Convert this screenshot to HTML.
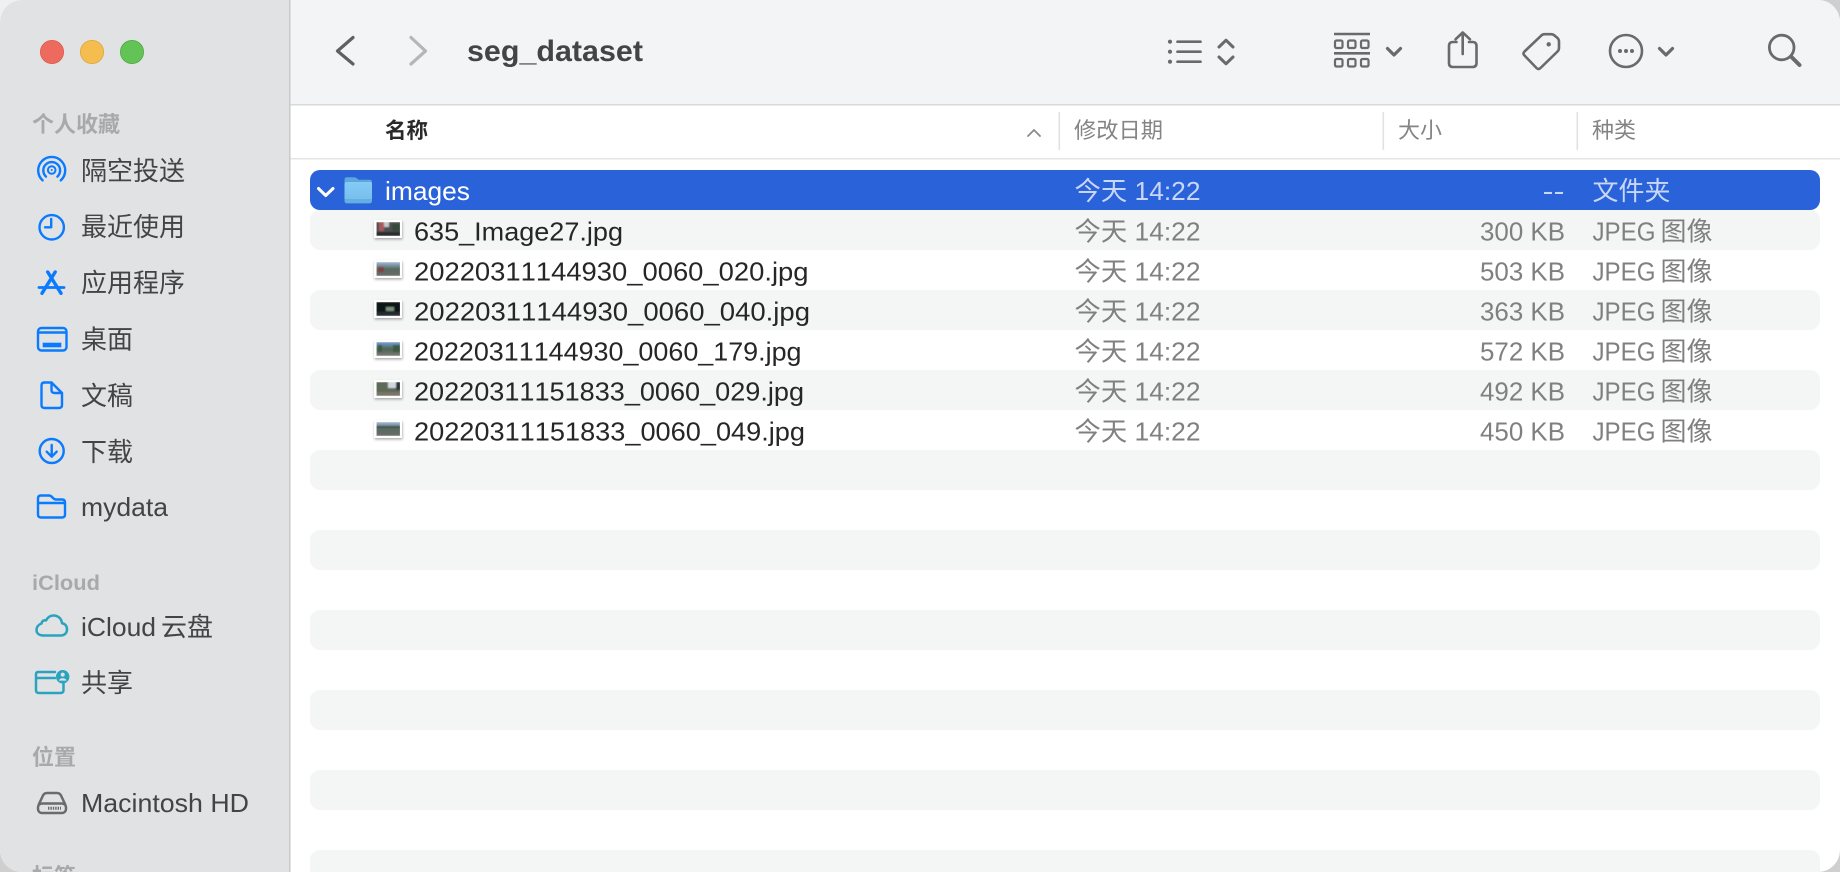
<!DOCTYPE html>
<html><head><meta charset="utf-8"><title>seg_dataset</title>
<style>
html,body{margin:0;padding:0;width:1840px;height:872px;overflow:hidden;background:#fff}
svg{display:block}
text{font-family:"Liberation Sans","Noto Sans CJK SC",sans-serif;font-kerning:none}
.side{font-size:26px;fill:#444446}
.lab{font-size:22px;font-weight:bold;fill:#a8a9ab}
.hd{font-size:22px;fill:#848484}
.name{font-size:26px;fill:#262626}
.g{font-size:26px;fill:#808080}
.w{font-size:26px;fill:#fff}
.s{font-size:26px;fill:#c9d7f6}
.ti{fill:none;stroke:#6a6a6c;stroke-linecap:round;stroke-linejoin:round}
.bl{fill:none;stroke:#0a7aff;stroke-width:2.4;stroke-linecap:round;stroke-linejoin:round}
.te{fill:none;stroke:#2aa3bf;stroke-width:2.5;stroke-linecap:round;stroke-linejoin:round}
.alt{fill:#f4f5f5}
</style></head><body>
<svg width="1840" height="872" viewBox="0 0 1840 872" xmlns="http://www.w3.org/2000/svg">
<defs>
<filter id="b" x="-30%" y="-30%" width="160%" height="180%"><feGaussianBlur stdDeviation="1.2"/></filter>
<filter id="t" x="-5%" y="-5%" width="110%" height="110%"><feGaussianBlur stdDeviation=".7"/></filter>
<clipPath id="win"><rect x="0" y="0" width="1840" height="872" rx="22"/></clipPath>
<clipPath id="th"><rect x="376.5" y="222" width="23.5" height="14"/><rect x="376.5" y="262" width="23.5" height="14"/><rect x="376.5" y="302" width="23.5" height="14"/><rect x="376.5" y="342" width="23.5" height="14"/><rect x="376.5" y="382" width="23.5" height="14"/><rect x="376.5" y="422" width="23.5" height="14"/></clipPath>
<linearGradient id="sky1" x1="0" y1="0" x2="0" y2="1"><stop offset="0" stop-color="#9fb9dc"/><stop offset=".5" stop-color="#55695f"/><stop offset="1" stop-color="#6c6a68"/></linearGradient>
<linearGradient id="sky2" x1="0" y1="0" x2="0" y2="1"><stop offset="0" stop-color="#76a0d8"/><stop offset=".5" stop-color="#4d6352"/><stop offset="1" stop-color="#7d7b78"/></linearGradient>
<linearGradient id="fold" x1="0" y1="0" x2="0" y2="1"><stop offset="0" stop-color="#84cbf7"/><stop offset="1" stop-color="#79bfee"/></linearGradient>
</defs>
<rect width="1840" height="872" fill="#cfcfcf"/>
<rect width="30" height="30" fill="#f0f0f0"/>
<g clip-path="url(#win)">
<rect width="1840" height="872" fill="#fff"/>
<!-- toolbar -->
<rect x="290" y="0" width="1550" height="104" fill="#f3f4f6"/>
<rect x="290" y="104" width="1550" height="1.5" fill="#d9d9da"/>
<rect x="290" y="158" width="1550" height="1.5" fill="#e4e4e4"/>
<!-- sidebar -->
<rect x="0" y="0" width="290" height="872" fill="#e1e2e4"/>
<rect x="289" y="0" width="1.5" height="872" fill="#c9c9cb"/>
<circle cx="52" cy="52" r="11.6" fill="#ee6a5f" stroke="#d95a50" stroke-width=".8"/>
<circle cx="92" cy="52" r="11.6" fill="#f5bd4f" stroke="#dea33a" stroke-width=".8"/>
<circle cx="132" cy="52" r="11.6" fill="#61c454" stroke="#50a845" stroke-width=".8"/>

<text x="32" y="132" class="lab" textLength="88" lengthAdjust="spacingAndGlyphs">个人收藏</text>
<text x="81" y="180" class="side" textLength="104" lengthAdjust="spacingAndGlyphs">隔空投送</text>
<text x="81" y="236" class="side" textLength="104" lengthAdjust="spacingAndGlyphs">最近使用</text>
<text x="81" y="292" class="side" textLength="104" lengthAdjust="spacingAndGlyphs">应用程序</text>
<text x="81" y="348.5" class="side" textLength="52" lengthAdjust="spacingAndGlyphs">桌面</text>
<text x="81" y="405" class="side" textLength="52" lengthAdjust="spacingAndGlyphs">文稿</text>
<text x="81" y="461" class="side" textLength="52" lengthAdjust="spacingAndGlyphs">下载</text>
<text x="81" y="516" class="side" textLength="87" lengthAdjust="spacingAndGlyphs">mydata</text>
<text x="32" y="590" class="lab" style="font-size:21px" textLength="68" lengthAdjust="spacingAndGlyphs">iCloud</text>
<text x="81" y="636" class="side" textLength="75" lengthAdjust="spacingAndGlyphs">iCloud</text>
<text x="161" y="636" class="side" textLength="52" lengthAdjust="spacingAndGlyphs">云盘</text>
<text x="81" y="692" class="side" textLength="52" lengthAdjust="spacingAndGlyphs">共享</text>
<text x="32" y="765" class="lab" textLength="44" lengthAdjust="spacingAndGlyphs">位置</text>
<text x="81" y="812" class="side" textLength="168" lengthAdjust="spacingAndGlyphs">Macintosh HD</text>
<text x="32" y="884" class="lab" textLength="44" lengthAdjust="spacingAndGlyphs">标签</text>

<!-- sidebar icons -->
<g class="bl">
<path d="M42.6 180.4A13.5 13.5 0 1 1 60.8 180.4"/>
<path d="M46 176.6A8.4 8.4 0 1 1 57.4 176.6"/>
<circle cx="51.7" cy="170" r="3.8" stroke-width="2"/>
<circle cx="51.7" cy="170" r="1" fill="#0a7aff" stroke="none"/>
<circle cx="51.7" cy="227.3" r="12.2"/>
<path d="M51.2 219V227.3H45"/>
<g stroke-width="3.4"><path d="M55.2 272L42 293.3M47.7 272L61 293.3"/><path stroke-width="2.8" d="M39 287.5H64"/></g>
<rect x="38" y="328" width="28.5" height="22.5" rx="3.5"/>
<path d="M38.5 332.5H66"/>
<rect x="42.7" y="342.7" width="18.6" height="4.6" fill="#0a7aff" stroke="none"/>
<path d="M51.5 382.5H44.5Q41.5 382.5 41.5 385.5V405Q41.5 408 44.5 408H59Q62 408 62 405V393M51.5 382.5V390Q51.5 393 54.5 393H62M51.5 382.5L62 393"/>
<circle cx="51.7" cy="451" r="12"/>
<path d="M51.7 445V456.5M46.7 451.7L51.7 456.7L56.7 451.7"/>
<path d="M41 495.5H49Q50.5 495.5 52 497L53 498Q54.5 499.5 56 499.5H62Q65 499.5 65 502.5V514.5Q65 517.5 62 517.5H41Q38 517.5 38 514.5V498.5Q38 495.5 41 495.5ZM38 503H65"/>
</g>
<g class="te">
<path d="M44 635.5H60.5C65 635.5 67 632.5 67 629.5C67 626 65 623.5 62 623.2C61.5 618.5 58 615.5 53.5 615.5C50 615.5 47.5 617.5 46 620.5C44.5 619.8 42 620.5 41.5 623.5C38.5 624.5 36.5 627 36.5 630C36.5 633.5 39.5 635.5 44 635.5Z"/>
<path d="M55 672H38Q36 672 36 674.5V690Q36 693 39 693H60.5Q63.5 693 63.5 690V683.5M36 678H55"/>
<circle cx="62.7" cy="676.7" r="6.7" fill="#2aa3bf" stroke="none"/>
<circle cx="62.7" cy="674.6" r="2" fill="#e1e2e4" stroke="none"/>
<path d="M58.9 680.6a3.9 3 0 0 1 7.6 0z" fill="#e1e2e4" stroke="none"/>
</g>
<g fill="none" stroke="#6b6b6d" stroke-width="2.5" stroke-linejoin="round">
<path d="M38.5 805L43 795.5Q44.3 793 47 793H57Q59.7 793 61 795.5L65.5 805"/>
<rect x="38" y="803.5" width="28" height="9.5" rx="4"/>
<path d="M48 808.3H61" stroke-width="3" stroke-dasharray="1.4 1"/>
</g>

<!-- nav -->
<path d="M353 37.5L337.5 51L353 64" fill="none" stroke="#606062" stroke-width="3.2" stroke-linecap="round" stroke-linejoin="round"/>
<path d="M411 37.5L425.5 51L411 64" fill="none" stroke="#b6b6b8" stroke-width="3.2" stroke-linecap="round" stroke-linejoin="round"/>
<text x="467" y="61" font-weight="bold" font-size="29.5" fill="#444446" textLength="176" lengthAdjust="spacingAndGlyphs">seg_dataset</text>

<!-- toolbar icons -->
<g class="ti" stroke-width="2.6">
<circle cx="1170" cy="41.7" r="2.1" fill="#6a6a6c" stroke="none"/><circle cx="1170" cy="51.7" r="2.1" fill="#6a6a6c" stroke="none"/><circle cx="1170" cy="61.7" r="2.1" fill="#6a6a6c" stroke="none"/>
<path d="M1177.5 41.7H1200.5M1177.5 51.7H1200.5M1177.5 61.7H1200.5"/>
<path stroke-width="3" d="M1219 47L1226 40.2L1233 47M1219 57L1226 63.8L1233 57"/>
<path stroke-linecap="butt" d="M1334 34H1370M1334 53.3H1370"/>
<g stroke-width="2.2">
<rect x="1335" y="40.5" width="7.5" height="7.5" rx="1.5"/><rect x="1348" y="40.5" width="7.5" height="7.5" rx="1.5"/><rect x="1361" y="40.5" width="7.5" height="7.5" rx="1.5"/>
<rect x="1335" y="59" width="7.5" height="7.5" rx="1.5"/><rect x="1348" y="59" width="7.5" height="7.5" rx="1.5"/><rect x="1361" y="59" width="7.5" height="7.5" rx="1.5"/>
</g>
<path stroke-width="3.2" d="M1387.5 48.5L1394 55L1400.5 48.5"/>
<path d="M1456.5 42H1453Q1449 42 1449 46V63Q1449 67 1453 67H1472.5Q1476.5 67 1476.5 63V46Q1476.5 42 1472.5 42H1469"/>
<path d="M1462.7 54V32.5M1455.5 39.3L1462.7 32.5L1470 39.3"/>
<path d="M1544.5 34.2H1551Q1553 34.2 1554.5 35.5L1557.5 38Q1559 39.5 1559 41.5V48Q1559 50 1557.5 51.5L1540.5 68Q1538.5 70 1536.5 68L1524.5 55.5Q1522.5 53.5 1524.5 51.5L1541 35.8Q1542.5 34.2 1544.5 34.2Z"/>
<circle cx="1548.7" cy="44.3" r="2.2" fill="#6a6a6c" stroke="none"/>
<circle cx="1626" cy="51" r="16"/>
<circle cx="1620" cy="51" r="2" fill="#6a6a6c" stroke="none"/><circle cx="1626" cy="51" r="2" fill="#6a6a6c" stroke="none"/><circle cx="1632" cy="51" r="2" fill="#6a6a6c" stroke="none"/>
<path stroke-width="3.2" d="M1659.5 48.5L1666 55L1672.5 48.5"/>
<circle cx="1781.7" cy="47.5" r="12.3" stroke-width="2.8"/>
<path stroke-width="4" d="M1791.5 57L1799.5 65"/>
</g>

<!-- header -->
<text x="385" y="138" font-size="21.5" font-weight="bold" fill="#2a2a2a" textLength="43" lengthAdjust="spacingAndGlyphs">名称</text>
<path d="M1028 136L1034 130L1040 136" fill="none" stroke="#8a8a8a" stroke-width="1.8" stroke-linecap="round" stroke-linejoin="round"/>
<rect x="1058.5" y="112" width="1.6" height="38" fill="#e2e2e2"/>
<rect x="1382.5" y="112" width="1.6" height="38" fill="#e2e2e2"/>
<rect x="1576.5" y="112" width="1.6" height="38" fill="#e2e2e2"/>
<text x="1074" y="138" class="hd" textLength="89" lengthAdjust="spacingAndGlyphs">修改日期</text>
<text x="1398" y="138" class="hd" textLength="44" lengthAdjust="spacingAndGlyphs">大小</text>
<text x="1592" y="138" class="hd" textLength="44" lengthAdjust="spacingAndGlyphs">种类</text>

<!-- rows -->
<rect x="310" y="210" width="1510" height="40" rx="10" class="alt"/>
<rect x="310" y="290" width="1510" height="40" rx="10" class="alt"/>
<rect x="310" y="370" width="1510" height="40" rx="10" class="alt"/>
<rect x="310" y="450" width="1510" height="40" rx="10" class="alt"/>
<rect x="310" y="530" width="1510" height="40" rx="10" class="alt"/>
<rect x="310" y="610" width="1510" height="40" rx="10" class="alt"/>
<rect x="310" y="690" width="1510" height="40" rx="10" class="alt"/>
<rect x="310" y="770" width="1510" height="40" rx="10" class="alt"/>
<rect x="310" y="850" width="1510" height="40" rx="10" class="alt"/>
<rect x="310" y="170" width="1510" height="40" rx="10" fill="#2962d9"/>

<!-- selected row -->
<path d="M318.5 188.5L325.7 195.5L333 188.5" fill="none" stroke="#fff" stroke-width="3" stroke-linecap="round" stroke-linejoin="round"/>
<path d="M344.5 180Q344.5 177.3 347 177.3H354Q356 177.3 357.5 178.8L358.5 179.8H369.5Q372 179.8 372 182.5V200.5Q372 203.3 369.5 203.3H347Q344.5 203.3 344.5 200.5Z" fill="#5da7dc"/>
<path d="M344.5 184Q344.5 182 346.5 182H370Q372 182 372 184V199H344.5Z" fill="url(#fold)"/>
<path d="M344.5 199H372V200.5Q372 203.3 369.5 203.3H347Q344.5 203.3 344.5 200.5Z" fill="#63afe4"/>
<text x="385" y="200" class="w" textLength="85" lengthAdjust="spacingAndGlyphs">images</text>
<text x="1074.5" y="200" class="s" textLength="126" lengthAdjust="spacingAndGlyphs">今天 14:22</text>
<text x="1564.5" y="200" class="s" text-anchor="end" textLength="22" lengthAdjust="spacingAndGlyphs">--</text>
<text x="1592.5" y="200" class="s" textLength="78" lengthAdjust="spacingAndGlyphs">文件夹</text>

<!-- thumbs -->
<rect x="374.5" y="221.5" width="28" height="18" fill="#666" opacity=".55" filter="url(#b)"/><rect x="374" y="220" width="28" height="18" fill="#fff"/>
<rect x="374.5" y="261.5" width="28" height="18" fill="#666" opacity=".55" filter="url(#b)"/><rect x="374" y="260" width="28" height="18" fill="#fff"/>
<rect x="374.5" y="301.5" width="28" height="18" fill="#666" opacity=".55" filter="url(#b)"/><rect x="374" y="300" width="28" height="18" fill="#fff"/>
<rect x="374.5" y="341.5" width="28" height="18" fill="#666" opacity=".55" filter="url(#b)"/><rect x="374" y="340" width="28" height="18" fill="#fff"/>
<rect x="374.5" y="381.5" width="28" height="18" fill="#666" opacity=".55" filter="url(#b)"/><rect x="374" y="380" width="28" height="18" fill="#fff"/>
<rect x="374.5" y="421.5" width="28" height="18" fill="#666" opacity=".55" filter="url(#b)"/><rect x="374" y="420" width="28" height="18" fill="#fff"/>
<g clip-path="url(#th)"><g filter="url(#t)">
<rect x="376" y="222" width="24.5" height="14" fill="#4b4f50"/><rect x="379" y="222" width="5" height="9" fill="#a8585c"/><rect x="384" y="222" width="5" height="5" fill="#c8c8cc"/><rect x="392" y="224" width="8.5" height="7" fill="#39473e"/><rect x="376" y="232" width="24.5" height="4" fill="#2c2c2e"/>
<rect x="376" y="262" width="24.5" height="14" fill="url(#sky1)"/><rect x="378" y="267" width="6" height="5" fill="#80403f"/>
<rect x="376" y="302" width="24.5" height="14" fill="#101412"/><rect x="386" y="307" width="8" height="4" fill="#77907c"/><rect x="376" y="312" width="24.5" height="4" fill="#252a33"/>
<rect x="376" y="342" width="24.5" height="14" fill="url(#sky2)"/><rect x="378" y="345" width="4" height="7" fill="#3a5a3e"/><rect x="393" y="345" width="7" height="7" fill="#3d5a3f"/>
<rect x="376" y="382" width="24.5" height="14" fill="#5c6a57"/><rect x="388" y="382" width="8" height="6" fill="#cfd8e0"/><rect x="396" y="382" width="4.5" height="8" fill="#2d3438"/><rect x="376" y="392" width="24.5" height="4" fill="#7a736a"/>
<rect x="376" y="422" width="24.5" height="14" fill="url(#sky1)"/><rect x="376" y="426" width="24.5" height="2" fill="#3f4d46"/>
</g></g>

<!-- file rows -->
<text x="414" y="240.5" class="name" textLength="209" lengthAdjust="spacingAndGlyphs">635_Image27.jpg</text>
<text x="1074.5" y="240.5" class="g" textLength="126" lengthAdjust="spacingAndGlyphs">今天 14:22</text>
<text x="1480" y="240.5" class="g" textLength="85" lengthAdjust="spacingAndGlyphs">300 KB</text>
<text x="1592.5" y="240.5" class="g" textLength="63" lengthAdjust="spacingAndGlyphs">JPEG</text><text x="1660.5" y="240.5" class="g" textLength="52" lengthAdjust="spacingAndGlyphs">图像</text>

<text x="414" y="280.5" class="name" textLength="394.5" lengthAdjust="spacingAndGlyphs">20220311144930_0060_020.jpg</text>
<text x="1074.5" y="280.5" class="g" textLength="126" lengthAdjust="spacingAndGlyphs">今天 14:22</text>
<text x="1480" y="280.5" class="g" textLength="85" lengthAdjust="spacingAndGlyphs">503 KB</text>
<text x="1592.5" y="280.5" class="g" textLength="63" lengthAdjust="spacingAndGlyphs">JPEG</text><text x="1660.5" y="280.5" class="g" textLength="52" lengthAdjust="spacingAndGlyphs">图像</text>

<text x="414" y="320.5" class="name" textLength="396" lengthAdjust="spacingAndGlyphs">20220311144930_0060_040.jpg</text>
<text x="1074.5" y="320.5" class="g" textLength="126" lengthAdjust="spacingAndGlyphs">今天 14:22</text>
<text x="1480" y="320.5" class="g" textLength="85" lengthAdjust="spacingAndGlyphs">363 KB</text>
<text x="1592.5" y="320.5" class="g" textLength="63" lengthAdjust="spacingAndGlyphs">JPEG</text><text x="1660.5" y="320.5" class="g" textLength="52" lengthAdjust="spacingAndGlyphs">图像</text>

<text x="414" y="360.5" class="name" textLength="387.5" lengthAdjust="spacingAndGlyphs">20220311144930_0060_179.jpg</text>
<text x="1074.5" y="360.5" class="g" textLength="126" lengthAdjust="spacingAndGlyphs">今天 14:22</text>
<text x="1480" y="360.5" class="g" textLength="85" lengthAdjust="spacingAndGlyphs">572 KB</text>
<text x="1592.5" y="360.5" class="g" textLength="63" lengthAdjust="spacingAndGlyphs">JPEG</text><text x="1660.5" y="360.5" class="g" textLength="52" lengthAdjust="spacingAndGlyphs">图像</text>

<text x="414" y="400.5" class="name" textLength="390" lengthAdjust="spacingAndGlyphs">20220311151833_0060_029.jpg</text>
<text x="1074.5" y="400.5" class="g" textLength="126" lengthAdjust="spacingAndGlyphs">今天 14:22</text>
<text x="1480" y="400.5" class="g" textLength="85" lengthAdjust="spacingAndGlyphs">492 KB</text>
<text x="1592.5" y="400.5" class="g" textLength="63" lengthAdjust="spacingAndGlyphs">JPEG</text><text x="1660.5" y="400.5" class="g" textLength="52" lengthAdjust="spacingAndGlyphs">图像</text>

<text x="414" y="440.5" class="name" textLength="391" lengthAdjust="spacingAndGlyphs">20220311151833_0060_049.jpg</text>
<text x="1074.5" y="440.5" class="g" textLength="126" lengthAdjust="spacingAndGlyphs">今天 14:22</text>
<text x="1480" y="440.5" class="g" textLength="85" lengthAdjust="spacingAndGlyphs">450 KB</text>
<text x="1592.5" y="440.5" class="g" textLength="63" lengthAdjust="spacingAndGlyphs">JPEG</text><text x="1660.5" y="440.5" class="g" textLength="52" lengthAdjust="spacingAndGlyphs">图像</text>
</g>
</svg>
</body></html>
